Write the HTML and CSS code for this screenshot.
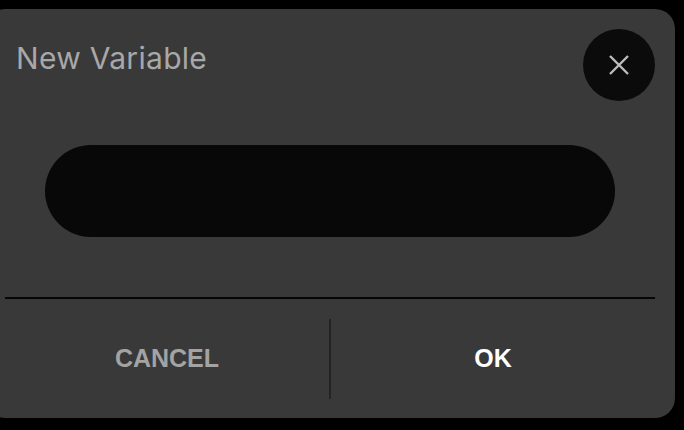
FILE: index.html
```html
<!DOCTYPE html>
<html>
    <head>
        <meta charset="utf-8">
        <link rel="stylesheet" href="styles.css">
        <title>New Variable</title>
    </head>
    <body>
        <div class="dialog">
            <div class="header">
                <h1 class="title">New Variable</h1>
                <button type="button" class="close" aria-label="Close">
                    <svg width="20" height="20" viewBox="0 0 20 20">
                        <path d="M1 1 L19 19 M19 1 L1 19" stroke="#bdbdbd" stroke-width="2.4" stroke-linecap="butt" fill="none"/>
                    </svg>
                </button>
            </div>
            <div class="field">
                <input type="text" id="varname" name="varname">
            </div>
            <div class="rule"></div>
            <div class="actions">
                <button type="button" class="btn cancel">CANCEL</button>
                <div class="sep"></div>
                <button type="button" class="btn ok">OK</button>
            </div>
        </div>
    </body>
</html>
```

FILE: styles.css
```css
body {
    margin: 0;
    background-color: #000;
    font-family: "Liberation Sans", Arial, sans-serif;
}
.dialog {
    margin: 9px 0 0 -15px;
    width: 650px;
    height: 389px;
    padding: 20px 20px 0 20px;
    background-color: #393939;
    border-radius: 20px;
}
.header {
    display: flex;
    justify-content: space-between;
    align-items: flex-start;
}
.title {
    margin: 11px 0 0 11px;
    font-family: Inter, "Liberation Sans", sans-serif;
    font-weight: 400;
    font-size: 30px;
    line-height: 36px;
    color: #a8a8a8;
    letter-spacing: 0.3px;
}
.close {
    width: 72px;
    height: 72px;
    border: none;
    border-radius: 50%;
    background-color: #0b0b0b;
    padding: 0;
    display: flex;
    align-items: center;
    justify-content: center;
}
.field {
    margin: 44px 40px 0 40px;
}
.field input {
    display: block;
    width: 100%;
    height: 92px;
    box-sizing: border-box;
    border: none;
    border-radius: 46px;
    background-color: #080808;
    padding: 0 40px;
    color: #ddd;
    font-size: 26px;
    outline: none;
}
.rule {
    margin-top: 60px;
    height: 2px;
    background-color: #060606;
}
.actions {
    display: flex;
    align-items: center;
    height: 119px;
}
.btn {
    flex: 1;
    height: 100%;
    border: none;
    background: none;
    font-family: "Liberation Sans", Arial, sans-serif;
    font-weight: bold;
    font-size: 25px;
    padding: 0;
}
.cancel {
    color: #a3a3a3;
}
.ok {
    color: #fff;
}
.sep {
    width: 2px;
    height: 80px;
    background-color: #232323;
}
```
